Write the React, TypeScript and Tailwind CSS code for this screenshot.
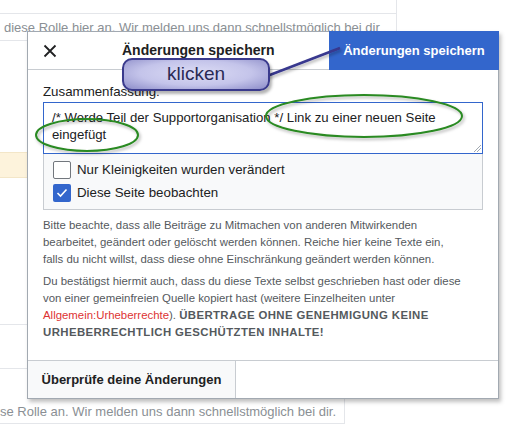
import React from "react";

export default function App() {
  return (
    <div
      className="relative w-[528px] h-[444px] bg-white overflow-hidden"
      style={{ fontFamily: '"Liberation Sans", Arial, sans-serif' }}
    >
      {/* background page */}
      <div className="flex flex-col text-[13px] text-[#8a8f94]">
        <div className="h-[14px] w-[397px] border-b border-r border-[#e4e6ea]" />
        <div className="h-[27px] w-[397px] border-b border-r border-[#e4e6ea] pl-[4px] flex items-center leading-none">
          diese Rolle hier an. Wir melden uns dann schnellstmöglich bei dir
        </div>
        <div className="h-[111px]" />
        <div className="h-[26px] w-[30px] bg-[#fdf3dc] border-y border-[#f3e6c8]" />
        <div className="h-[146px]" />
        <div className="h-px w-[30px] bg-[#e4e6ea]" />
        <div className="h-[43px]" />
        <div className="h-px w-[30px] bg-[#e4e6ea]" />
        <div className="h-[30px]" />
        <div className="h-[25px] w-[345px] border-b border-r border-[#e4e6ea] flex items-center leading-none whitespace-nowrap overflow-hidden">
          se Rolle an. Wir melden uns dann schnellstmöglich bei dir.
        </div>
      </div>

      {/* dialog */}
      <div className="absolute left-[27px] top-[31px] w-[472px] h-[368px] bg-white border border-[#a2a9b1] shadow-[2px_3px_4px_rgba(0,0,0,0.25)] flex flex-col text-[#202122]">
        <div className="h-[38px] flex border-b border-[#c8ccd1] shrink-0">
          <div className="w-[43px] flex items-center justify-center">
            <svg width="14" height="14" viewBox="0 0 14 14">
              <path d="M1.5 1.5 L12.5 12.5 M12.5 1.5 L1.5 12.5" stroke="#202122" strokeWidth="1.8" />
            </svg>
          </div>
          <div className="flex-1 flex items-center pl-[51px] text-[14px] font-bold">
            Änderungen speichern
          </div>
          <div className="w-[170px] -mt-px -mr-px h-[39px] bg-[#36c] text-white font-bold text-[13px] flex items-center justify-center">
            Änderungen speichern
          </div>
        </div>

        <div className="flex-1 flex flex-col px-[15px] pt-[13px]">
          <div className="text-[13.3px] leading-[17px] mb-[2px]">Zusammenfassung:</div>
          <div className="relative h-[52px] border border-[#36c] bg-white px-[8px] pt-[6px] text-[13.2px] leading-[17px] text-[#202122]">
            /* Werde Teil der Supportorganisation */ Link zu einer neuen Seite eingefügt
            <svg className="absolute right-[1px] bottom-[1px]" width="8" height="8" viewBox="0 0 8 8">
              <path d="M1 8 L8 1 M4 8 L8 4" stroke="#a2a9b1" strokeWidth="1" />
            </svg>
          </div>
          <div className="h-[56px] bg-[#f8f9fa] border-x border-b border-[#c8ccd1] flex flex-col justify-center gap-[3px] pl-[9px] text-[13.3px]">
            <div className="flex items-center gap-[6px]">
              <div className="w-[18px] h-[18px] border border-[#72777d] rounded-[2px] bg-white" />
              <span>Nur Kleinigkeiten wurden verändert</span>
            </div>
            <div className="flex items-center gap-[6px]">
              <div className="w-[18px] h-[18px] rounded-[2px] bg-[#36c] flex items-center justify-center">
                <svg width="12" height="10" viewBox="0 0 12 10">
                  <path d="M1.5 5 L4.5 8 L10.5 1.5" stroke="white" strokeWidth="1.6" fill="none" />
                </svg>
              </div>
              <span>Diese Seite beobachten</span>
            </div>
          </div>

          <div className="mt-[7px] w-[421px] text-[11.4px] leading-[17px] text-[#54595d]">
            <p className="mb-[5px]">
              Bitte beachte, dass alle Beiträge zu Mitmachen von anderen Mitwirkenden bearbeitet, geändert oder gelöscht werden können. Reiche hier keine Texte ein, falls du nicht willst, dass diese ohne Einschränkung geändert werden können.
            </p>
            <p>
              Du bestätigst hiermit auch, dass du diese Texte selbst geschrieben hast oder diese von einer gemeinfreien Quelle kopiert hast (weitere Einzelheiten unter{" "}
              <span className="text-[#d33]">Allgemein:Urheberrechte</span>).{" "}
              <b className="tracking-[0.4px]">ÜBERTRAGE OHNE GENEHMIGUNG KEINE URHEBERRECHTLICH GESCHÜTZTEN INHALTE!</b>
            </p>
          </div>
        </div>

        <div className="h-[38px] border-t border-[#c8ccd1] flex shrink-0">
          <div className="w-[208px] bg-[#f8f9fa] border-r border-[#c8ccd1] flex items-center justify-center font-bold text-[13px] text-[#202122]">
            Überprüfe deine Änderungen
          </div>
        </div>
      </div>

      {/* annotations */}
      <svg className="absolute left-0 top-0 pointer-events-none" width="528" height="444">
        <defs>
          <filter id="sh" x="-20%" y="-20%" width="140%" height="160%">
            <feDropShadow dx="1.5" dy="2" stdDeviation="1.5" floodColor="#000" floodOpacity="0.3" />
          </filter>
        </defs>
        <line x1="262" y1="78" x2="340" y2="48" stroke="#38388e" strokeWidth="2.5" filter="url(#sh)" />
        <ellipse cx="364" cy="116" rx="98" ry="21" fill="none" stroke="#2a8a22" strokeWidth="2" filter="url(#sh)" />
        <ellipse cx="87" cy="135" rx="51" ry="16" fill="none" stroke="#2a8a22" strokeWidth="2" filter="url(#sh)" />
      </svg>
      <div
        className="absolute left-[122px] top-[58px] w-[148px] h-[33px] rounded-[10px] border-2 border-[#3a3a8c] flex items-center justify-center text-[19px] text-[#2a2a55] shadow-[2px_3px_3px_rgba(0,0,0,0.3)]"
        style={{ background: "radial-gradient(ellipse at 50% 45%, #dcdcf5 0%, #c4c4ea 55%, #8c8cc8 100%)" }}
      >
        klicken
      </div>
    </div>
  );
}
